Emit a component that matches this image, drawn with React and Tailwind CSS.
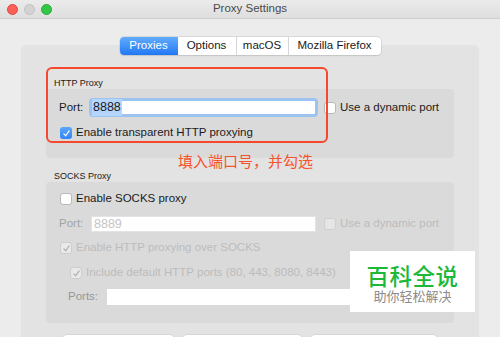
import React from "react";

const Check = ({ color = "#fff" }) => (
  <svg viewBox="0 0 12 12" className="w-[9px] h-[9px]">
    <polyline points="2.5,6.5 5,9 9.5,2.5" fill="none" stroke={color} strokeWidth="1.6" strokeLinecap="round" strokeLinejoin="round" />
  </svg>
);

const Checkbox = ({ state }) => {
  if (state === "on")
    return (
      <div className="w-[12px] h-[12px] rounded-[3px] bg-linear-to-b from-[#5aa6fb] to-[#2f83f6] flex items-center justify-center shrink-0">
        <Check />
      </div>
    );
  if (state === "off-dis")
    return <div className="w-[12px] h-[12px] rounded-[3px] bg-[#e6e6e6] border border-[#cfcfcf] shrink-0" />;
  if (state === "on-dis")
    return (
      <div className="w-[12px] h-[12px] rounded-[3px] bg-[#e9e9e9] border border-[#cdcdcd] flex items-center justify-center shrink-0">
        <Check color="#b0b0b0" />
      </div>
    );
  return <div className="w-[12px] h-[12px] rounded-[3px] bg-white border border-[#b9b9b9] shrink-0" />;
};

const tabs = [
  { name: "Proxies", w: "w-[58px]", active: true },
  { name: "Options", w: "w-[58px]" },
  { name: "macOS", w: "w-[52px]" },
  { name: "Mozilla Firefox", w: "w-[93px]" },
];

export default function App() {
  return (
    <div className="w-[500px] h-[337px] overflow-hidden relative bg-[#ececec] text-[#1a1a1a] font-['Liberation_Sans',Arial,sans-serif]">
      {/* title bar */}
      <div className="h-[19px] border-b border-[#cfcfcf] bg-linear-to-b from-[#ebebeb] to-[#dedede] grid grid-cols-[1fr_auto_1fr] items-center">
        <div className="flex items-center gap-[6px] pl-[7px]">
          <div className="w-[11px] h-[11px] rounded-full bg-[#fc5f57] border border-[#e2463f]" />
          <div className="w-[11px] h-[11px] rounded-full bg-[#d3d3d3] border border-[#c2c2c2]" />
          <div className="w-[11px] h-[11px] rounded-full bg-[#33c748] border border-[#27aa35]" />
        </div>
        <div className="text-[11.5px] text-[#4a4a4a] leading-none">Proxy Settings</div>
        <div />
      </div>

      {/* tabs */}
      <div className="mt-[18px] flex justify-center relative z-10">
        <div className="flex h-[18px] rounded-[4px] bg-white shadow-[0_0_0_0.5px_#c4c4c4,0_1px_1px_rgba(0,0,0,0.12)] overflow-hidden">
          {tabs.map((t, i) => (
            <div
              key={t.name}
              className={
                t.active
                  ? `${t.w} flex items-center justify-center text-[11.5px] text-white bg-linear-to-b from-[#62acfc] to-[#1f77f4]`
                  : `${t.w} flex items-center justify-center text-[11.5px] text-[#1a1a1a] ${i > 1 ? "border-l border-[#d6d6d6]" : ""}`
              }
            >
              {t.name}
            </div>
          ))}
        </div>
      </div>

      {/* tab panel */}
      <div className="mx-[21px] -mt-[10px] h-[300px] rounded-[5px] bg-[#e3e3e3] px-[25px] pt-[33px]">
        <div className="text-[9px] leading-[11px] h-[11px] pl-[8px]">HTTP Proxy</div>
        <div className="rounded-[4px] bg-[#dadada] pt-[9px] pb-[19px] pl-[13px]">
          <div className="flex items-center h-[19px]">
            <span className="text-[11.5px] w-[30px]">Port:</span>
            <div className="w-[229px] h-[19px] rounded-[4px] border-[3px] border-[#9dc3f1] bg-white flex items-center">
              <span className="bg-[#b4d5fe] text-[12.5px] leading-[17px] px-[1px]">8888</span>
            </div>
            <div className="ml-[6px] flex items-center gap-[4px]">
              <Checkbox state="off" />
              <span className="text-[11.5px]">Use a dynamic port</span>
            </div>
          </div>
          <div className="mt-[10px] flex items-center gap-[4px] h-[12px] pl-[1px]">
            <Checkbox state="on" />
            <span className="text-[11.5px]">Enable transparent HTTP proxying</span>
          </div>
        </div>

        <div className="mt-[13px] text-[9px] leading-[11px] h-[11px] pl-[8px]">SOCKS Proxy</div>
        <div className="rounded-[4px] bg-[#dadada] pt-[11px] pb-[18px] pl-[13px]">
          <div className="flex items-center gap-[4px] h-[12px] pl-[1px]">
            <Checkbox state="off" />
            <span className="text-[11.5px]">Enable SOCKS proxy</span>
          </div>
          <div className="mt-[11px] flex items-center h-[16px]">
            <span className="text-[11.5px] w-[32px] text-[#a3a3a3]">Port:</span>
            <div className="w-[225px] h-[16px] bg-white border border-[#e3e3e3] flex items-center pl-[2px]">
              <span className="text-[12.5px] text-[#c4c4c4]">8889</span>
            </div>
            <div className="ml-[8px] flex items-center gap-[4px]">
              <Checkbox state="off-dis" />
              <span className="text-[11.5px] text-[#bcbcbc]">Use a dynamic port</span>
            </div>
          </div>
          <div className="mt-[10px] flex items-center gap-[4px] h-[12px] pl-[1px]">
            <Checkbox state="on-dis" />
            <span className="text-[11.5px] text-[#bcbcbc]">Enable HTTP proxying over SOCKS</span>
          </div>
          <div className="mt-[13px] flex items-center gap-[4px] h-[12px] pl-[11px]">
            <Checkbox state="on-dis" />
            <span className="text-[11.5px] text-[#bcbcbc]">Include default HTTP ports (80, 443, 8080, 8443)</span>
          </div>
          <div className="mt-[10px] flex items-center h-[16px] pl-[9px]">
            <span className="text-[11.5px] w-[39px] text-[#979797]">Ports:</span>
            <div className="w-[340px] h-[16px] bg-white" />
          </div>
        </div>

        <div className="mt-[12px] ml-[17px] flex gap-[9px]">
          <div className="w-[111px] h-[20px] rounded-[4px] bg-white shadow-[0_0_0_0.5px_#c8c8c8]" />
          <div className="w-[119px] h-[20px] rounded-[4px] bg-white shadow-[0_0_0_0.5px_#c8c8c8]" />
          <div className="w-[126px] h-[20px] rounded-[4px] bg-white shadow-[0_0_0_0.5px_#c8c8c8]" />
        </div>
      </div>

      {/* annotation */}
      <div className="absolute left-[46px] top-[67px] w-[282px] h-[76px] border-2 border-[#f5482c] rounded-[6px]" />
      <div className="absolute left-[178px] top-[152px] text-[15px] leading-[18px] text-[#f6532d] font-['Noto_Sans_CJK_SC',sans-serif]">
        填入端口号，并勾选
      </div>

      {/* watermark */}
      <div className="absolute left-[350px] top-[251px] w-[125px] h-[61px] bg-white flex flex-col items-center pt-[11px] font-['Noto_Sans_CJK_SC',sans-serif]">
        <div className="text-[22.5px] leading-[26px] text-[#1cb83a] font-medium tracking-[0.5px]">百科全说</div>
        <div className="text-[13px] leading-[16px] text-[#8b8b8b]">助你轻松解决</div>
      </div>
    </div>
  );
}
